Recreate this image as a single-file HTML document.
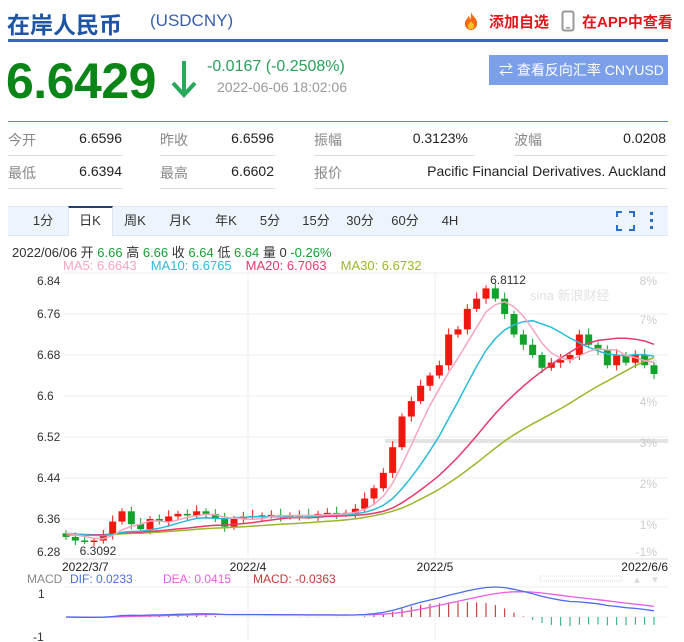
<!DOCTYPE html>
<html><head><meta charset="utf-8">
<style>
*{margin:0;padding:0;box-sizing:border-box}
body{width:684px;height:642px;background:#fff;font-family:"Liberation Sans","Noto Sans CJK SC",sans-serif;position:relative;overflow:hidden;color:#333}
.a{position:absolute;white-space:nowrap}
.lb{color:#888;font-size:14px}
.v{color:#222;font-size:14px;text-align:right}
.tab{position:absolute;top:207px;height:28px;line-height:28px;font-size:13px;color:#333;text-align:center;width:44px}
</style></head><body>
<div class="a" style="left:7px;top:6px;font-size:23px;font-weight:bold;color:#1f55a5">在岸人民币</div>
<div class="a" style="left:150px;top:11px;font-size:17px;color:#3a5fa8">(USDCNY)</div>
<svg class="a" style="left:461px;top:11px" width="20" height="20" viewBox="0 0 20 20"><path d="M10 1C11 5 15 6 16 11c1 5-3 8-6 8s-7-3-6-8c1-3 3-3 3-6 2 1 2 3 2 4 1-2 1-5 1-8z" fill="#f46a12"/><path d="M10 10c1 2 3 3 3 5s-1 3-3 3-3-1-3-3 2-3 3-5z" fill="#ffc02a"/></svg>
<div class="a" style="left:489px;top:11px;font-size:15px;font-weight:bold;color:#e4151b">添加自选</div>
<svg class="a" style="left:561px;top:10px" width="14" height="22" viewBox="0 0 14 22"><rect x="1.5" y="1.5" width="11" height="19" rx="2" fill="none" stroke="#999" stroke-width="2"/><rect x="5" y="17" width="4" height="1.5" fill="#999"/></svg>
<div class="a" style="left:582px;top:11px;font-size:15px;font-weight:bold;color:#e4151b">在APP中查看</div>
<div class="a" style="left:8px;top:39px;width:660px;height:3px;background:#3d65c0"></div>
<div class="a" style="left:6px;top:52px;font-size:50px;font-weight:bold;color:#0b8518;letter-spacing:-0.5px">6.6429</div>
<svg class="a" style="left:170px;top:59px" width="28" height="40" viewBox="0 0 28 40"><path d="M14 2V35M3 24L14 36L25 24" fill="none" stroke="#27a85a" stroke-width="4"/></svg>
<div class="a" style="left:207px;top:58px;font-size:16px;color:#2aa05a">-0.0167 (-0.2508%)</div>
<div class="a" style="left:217px;top:79px;font-size:14px;color:#999">2022-06-06 18:02:06</div>
<div class="a" style="left:489px;top:55px;width:179px;height:30px;background:#7b9fe8;color:#fff;font-size:14px;line-height:30px;padding-left:10px">⇄ 查看反向汇率 CNYUSD</div>
<div class="a" style="left:8px;top:121px;width:660px;height:1px;background:#4a8ad8"></div>
<div class="a lb" style="left:8px;top:130px">今开</div><div class="a v" style="left:60px;width:62px;top:130px">6.6596</div>
<div class="a lb" style="left:160px;top:130px">昨收</div><div class="a v" style="left:210px;width:64px;top:130px">6.6596</div>
<div class="a lb" style="left:314px;top:130px">振幅</div><div class="a v" style="left:380px;width:88px;top:130px">0.3123%</div>
<div class="a lb" style="left:514px;top:130px">波幅</div><div class="a v" style="left:580px;width:86px;top:130px">0.0208</div>
<div class="a lb" style="left:8px;top:163px">最低</div><div class="a v" style="left:60px;width:62px;top:163px">6.6394</div>
<div class="a lb" style="left:160px;top:163px">最高</div><div class="a v" style="left:210px;width:64px;top:163px">6.6602</div>
<div class="a lb" style="left:314px;top:163px">报价</div><div class="a v" style="left:380px;width:286px;top:163px">Pacific Financial Derivatives. Auckland</div>
<div class="a" style="left:8px;top:155px;width:114px;height:1px;background:#ddd"></div>
<div class="a" style="left:160px;top:155px;width:116px;height:1px;background:#ddd"></div>
<div class="a" style="left:314px;top:155px;width:160px;height:1px;background:#ddd"></div>
<div class="a" style="left:514px;top:155px;width:154px;height:1px;background:#ddd"></div>
<div class="a" style="left:8px;top:188px;width:114px;height:1px;background:#ddd"></div>
<div class="a" style="left:160px;top:188px;width:116px;height:1px;background:#ddd"></div>
<div class="a" style="left:314px;top:188px;width:354px;height:1px;background:#ddd"></div>
<div class="a" style="left:8px;top:206px;width:660px;height:30px;background:#eef4fc;border-top:1px solid #dde6f2;border-bottom:1px solid #dde6f2"></div>
<div class="a" style="left:68px;top:206px;width:45px;height:30px;background:#fff;border-top:2px solid #1f3f7a;border-left:1px solid #dde6f2;border-right:1px solid #dde6f2"></div>
<div class="tab" style="left:21px">1分</div><div class="tab" style="left:68px">日K</div><div class="tab" style="left:113px">周K</div><div class="tab" style="left:158px">月K</div><div class="tab" style="left:204px">年K</div><div class="tab" style="left:248px">5分</div><div class="tab" style="left:294px">15分</div><div class="tab" style="left:338px">30分</div><div class="tab" style="left:383px">60分</div><div class="tab" style="left:428px">4H</div>
<svg class="a" style="left:616px;top:211px" width="40" height="20" viewBox="0 0 40 20"><path d="M1 6V1h5M13 1h5v5M18 14v5h-5M6 19H1v-5" fill="none" stroke="#2a6fd0" stroke-width="2"/><rect x="34" y="1" width="3" height="3" fill="#2a6fd0"/><rect x="34" y="8" width="3" height="3" fill="#2a6fd0"/><rect x="34" y="15" width="3" height="3" fill="#2a6fd0"/></svg>
<div class="a" style="left:12px;top:242px;font-size:13px;color:#333">2022/06/06 开 <span style="color:#1a9e33">6.66</span> 高 <span style="color:#1a9e33">6.66</span> 收 <span style="color:#1a9e33">6.64</span> 低 <span style="color:#1a9e33">6.64</span> 量 0 <span style="color:#1a9e33">-0.26%</span></div>
<div class="a" style="left:63px;top:258px;font-size:13px"><span style="color:#f7a6c0">MA5: 6.6643</span><span style="color:#2bbbd8;margin-left:14px">MA10: 6.6765</span><span style="color:#e8386c;margin-left:14px">MA20: 6.7063</span><span style="color:#9ab82a;margin-left:14px">MA30: 6.6732</span></div>
<svg class="a" style="left:0;top:0" width="684" height="642" id="ch"></svg>
<script>
var s=document.getElementById('ch'),h='';
function L(x1,y1,x2,y2,c,w){h+='<line x1="'+x1+'" y1="'+y1+'" x2="'+x2+'" y2="'+y2+'" stroke="'+c+'" stroke-width="'+(w||1)+'"/>';}
function T(x,y,t,c,a,sz){h+='<text x="'+x+'" y="'+y+'" fill="'+c+'" font-size="'+(sz||12)+'" text-anchor="'+(a||'start')+'" font-family="Liberation Sans, Noto Sans CJK SC, sans-serif">'+t+'</text>';}
var X0=64,X1=668;
L(X0,273,X1,273,'#eee');
var lab=['6.84','6.76','6.68','6.6','6.52','6.44','6.36','6.28'];
for(var i=0;i<8;i++){var y=273+i*41;if(i>0&&i<7)L(X0,y,X1,y,'#eee');T(37,i==0?285:(i==7?556:y+4),lab[i],'#333');}
L(X0,559,X1,559,'#ddd');
[248,435].forEach(function(x){L(x,273,x,640,'#eee')});
h+='<rect x="385" y="439" width="283" height="4" fill="#e3e3e3"/>';
var pc=['8%','7%','5%','4%','3%','2%','1%','-1%'],py=[285,324,365,406,447,488,529,556];
pc.forEach(function(t,i){T(657,py[i],t,'#ccc','end')});
T(530,300,'sina 新浪财经','#e2e2e2','start',13);
var C=[6.325,6.318,6.317,6.318,6.33,6.355,6.375,6.35,6.34,6.36,6.355,6.365,6.37,6.367,6.375,6.37,6.36,6.345,6.36,
6.365,6.366,6.367,6.368,6.365,6.367,6.368,6.366,6.37,6.372,6.37,6.372,6.38,6.40,6.42,6.45,6.50,6.56,6.59,6.62,6.64,
6.66,6.72,6.73,6.77,6.79,6.81,6.79,6.76,6.72,6.70,6.68,6.655,6.665,6.67,6.68,6.72,6.70,6.69,6.66,6.68,6.665,6.68,6.66,6.643];
var n=C.length,dx=(654-66)/(n-1);
function Y(p){return 273+(6.84-p)*512.5;}
function PX(i){return 66+i*dx;}
var O=[6.332];for(var i=1;i<n;i++)O.push(C[i-1]);
for(var i=0;i<n;i++){var o=O[i],c=C[i],up=c>=o,col=up?'#f0170f':'#12a12a',x=PX(i);
var hi=Math.max(o,c)+0.006+(i%3)*0.003,lo=Math.min(o,c)-0.006-(i%2)*0.004;if(i==1)lo=6.3092;
L(x,Y(hi),x,Y(lo),col);var t=Y(Math.max(o,c)),b=Y(Math.min(o,c));if(b-t<1.5)b=t+1.5;
h+='<rect x="'+(x-3.5)+'" y="'+t+'" width="7" height="'+(b-t)+'" fill="'+col+'"/>';}
T(98,555,'6.3092','#333','middle');T(508,284,'6.8112','#333','middle');
function ma(k,col){var pts=[];var pad=6.335;for(var i=0;i<n;i++){var sm=0;for(var j=i-k+1;j<=i;j++)sm+=(j<0?pad+(j*0.0004):C[j]);pts.push(PX(i).toFixed(1)+','+Y(sm/k).toFixed(1));}
h+='<polyline points="'+pts.join(' ')+'" fill="none" stroke="'+col+'" stroke-width="1.5"/>';}
ma(30,'#9ab82a');ma(20,'#e8386c');ma(10,'#2bbbd8');ma(5,'#f7a6c0');
T(62,571,'2022/3/7','#222','start',12);T(248,571,'2022/4','#222','middle',12);T(435,571,'2022/5','#222','middle',12);T(668,571,'2022/6/6','#222','end',12);
T(27,583,'MACD','#888','start',12);T(70,583,'DIF: 0.0233','#4b6cf0','start',12);T(163,583,'DEA: 0.0415','#e85ce8','start',12);T(253,583,'MACD: -0.0363','#c23a3a','start',12);
h+='<rect x="540" y="576" width="82" height="5" fill="none" stroke="#ddd" stroke-dasharray="1,1"/>';T(637,583,'▲','#ddd','middle',10);T(655,583,'▼','#ddd','middle',10);
L(X0,587,X1,587,'#eee');L(X0,617,X1,617,'#f2f2f2');
T(38,598,'1','#333');T(33,641,'-1','#333');
var e12=C[0],e26=C[0],dea=0,D=[],E=[];for(var i=0;i<n;i++){e12=e12+(C[i]-e12)*2/13;e26=e26+(C[i]-e26)*2/27;var d=e12-e26;dea=dea+(d-dea)*2/10;D.push(d);E.push(dea);}
var mx=0;D.forEach(function(v){mx=Math.max(mx,Math.abs(v))});var sc=30/mx;
for(var i=0;i<n;i++){var m=(D[i]-E[i])*2*sc*0.9,x=PX(i);if(Math.abs(m)>0.3)L(x,617,x,617-m,m>0?'#c21f1f':'#1aaa7a');}
function pl(A,col){var p=[];for(var i=0;i<n;i++)p.push(PX(i).toFixed(1)+','+(617-A[i]*sc).toFixed(1));h+='<polyline points="'+p.join(' ')+'" fill="none" stroke="'+col+'" stroke-width="1.3"/>';}
pl(E,'#e85ce8');pl(D,'#4b6cf0');
s.innerHTML=h;
</script>
</body></html>
